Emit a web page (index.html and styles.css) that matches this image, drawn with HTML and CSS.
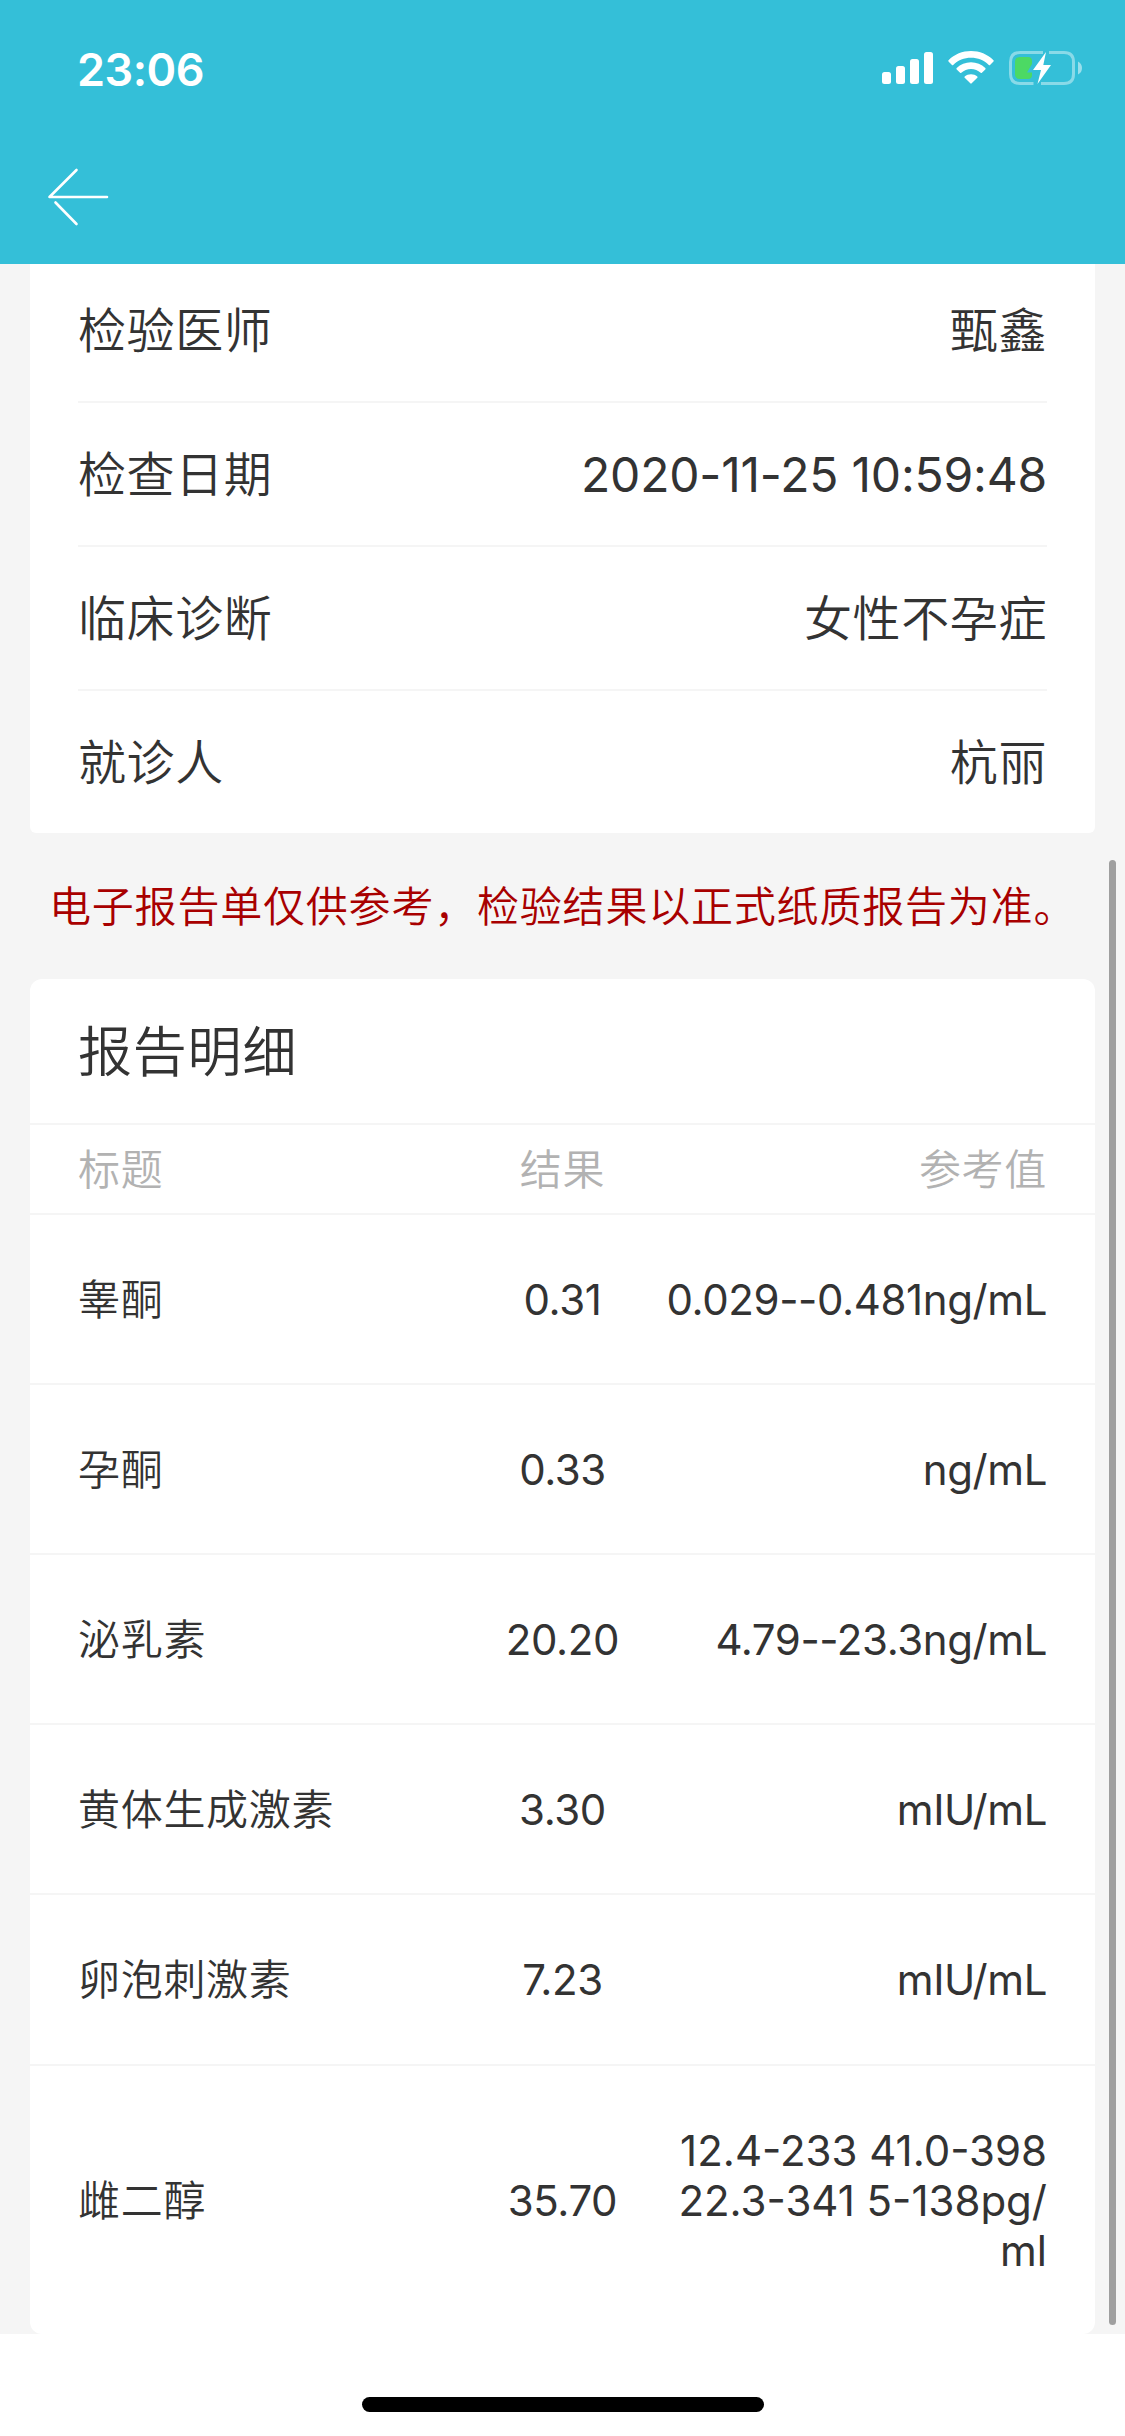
FILE: index.html
```html
<!DOCTYPE html>
<html lang="zh-CN">
<head>
  <meta charset="UTF-8">
  <meta name="viewport" content="width=device-width, initial-scale=1.0">
  <title>检验报告</title>
  <link rel="stylesheet" href="styles.css">
</head>
<body>
  <header class="header">
    <div class="status-bar">
      <span class="time">23:06</span>
      <svg class="status-icons" width="204" height="40" viewBox="880 50 204 40">
        <!-- signal -->
        <g fill="#fff">
          <rect x="882" y="73" width="9" height="12" rx="2.5"/>
          <rect x="896" y="67" width="9" height="18" rx="2.5"/>
          <rect x="910" y="60" width="9" height="25" rx="2.5"/>
          <rect x="924" y="53" width="9" height="32" rx="2.5"/>
        </g>
        <!-- wifi -->
        <g fill="#fff">
          <path d="M971 52C962.500 52 954.500 55.200 948.500 61.200Q948 61.800 948.500 62.400L952 65.900Q952.600 66.500 953.200 65.900C958 61.300 964.200 58.800 971 58.800S984 61.300 988.800 65.900Q989.400 66.500 990 65.900L993.500 62.400Q994 61.800 993.500 61.200C987.500 55.200 979.500 52 971 52Z"/>
          <path d="M971 63.200C965.500 63.200 960.500 65.300 956.700 69Q956 69.700 956.700 70.400L960.100 73.800Q960.700 74.400 961.300 73.800C964 71.400 967.300 70 971 70S978 71.400 980.700 73.800Q981.300 74.400 981.900 73.800L985.300 70.400Q986 69.700 985.300 69C981.500 65.300 976.500 63.200 971 63.200Z"/>
          <path d="M971 75.200C968.600 75.200 966.400 76 964.700 77.400Q964 78 964.700 78.700L970.300 84.300Q971 85 971.700 84.300L977.300 78.700Q978 78 977.300 77.400C975.600 76 973.400 75.200 971 75.200Z"/>
        </g>
        <!-- battery -->
        <path d="M1043 53.500H1020Q1010.500 53.500 1010.500 63V75Q1010.500 84.500 1020 84.500H1033.500M1049 53.500H1064Q1073.500 53.500 1073.500 63V75Q1073.500 84.500 1064 84.500H1041" fill="none" stroke="#fff" stroke-opacity=".42" stroke-width="3"/>
        <path d="M1078 62.500Q1082 64.500 1082 69T1078 75.500Z" fill="#fff" fill-opacity=".5"/>
        <path d="M1020 58H1028Q1032 58 1032 62V65L1027 73.500H1032V76Q1032 80 1028 80H1020Q1015 80 1015 75V63Q1015 58 1020 58Z" fill="#4cd964"/>
        <path d="M1046 53L1033 71H1041L1037.500 85L1051 66H1043.300Z" fill="#fff"/>
      </svg>
    </div>
    <div class="nav-bar">
      <svg class="back" width="64" height="60" viewBox="46 167 64 60" fill="none" stroke="#fff" stroke-width="2.600" stroke-linecap="round" stroke-linejoin="round">
        <path d="M107 197H49.500L76.500 170M55.500 202.500L76.500 224"/>
      </svg>
    </div>
  </header>

  <main class="content">
    <section class="info-card">
      <div class="info-row"><span>检验医师</span><span>甄鑫</span></div>
      <div class="info-row"><span>检查日期</span><span class="date">2020-11-25 10:59:48</span></div>
      <div class="info-row"><span>临床诊断</span><span>女性不孕症</span></div>
      <div class="info-row"><span>就诊人</span><span>杭丽</span></div>
    </section>

    <p class="notice">电子报告单仅供参考，检验结果以正式纸质报告为准。</p>

    <section class="detail-card">
      <h2 class="detail-title">报告明细</h2>
      <div class="detail-row detail-head"><span>标题</span><span>结果</span><span>参考值</span></div>
      <div class="detail-row"><span>睾酮</span><span class="num">0.31</span><span class="num">0.029--0.481ng/mL</span></div>
      <div class="detail-row"><span>孕酮</span><span class="num">0.33</span><span class="num">ng/mL</span></div>
      <div class="detail-row"><span>泌乳素</span><span class="num">20.20</span><span class="num">4.79--23.3ng/mL</span></div>
      <div class="detail-row"><span>黄体生成激素</span><span class="num">3.30</span><span class="num">mIU/mL</span></div>
      <div class="detail-row"><span>卵泡刺激素</span><span class="num">7.23</span><span class="num">mIU/mL</span></div>
      <div class="detail-row"><span>雌二醇</span><span class="num">35.70</span><span class="num multi">12.4-233 41.0-398<br>22.3-341 5-138pg/<br>ml</span></div>
    </section>
    <div class="scrollbar"></div>
  </main>

  <footer class="footer">
    <div class="home-indicator"></div>
  </footer>
</body>
</html>
```
FILE: styles.css
```css
* {
  box-sizing: border-box;
}

body {
  margin: 0;
  width: 1125px;
  height: 2436px;
  display: flex;
  flex-direction: column;
  overflow: hidden;
  background: #fff;
  color: #333;
  font-family: "Noto Sans CJK SC", sans-serif;
  font-weight: 350;
}

.header {
  height: 264px;
  background: #34bfd8;
  flex-shrink: 0;
}

.status-bar {
  height: 138px;
  padding: 0 41px 0 77px;
  display: flex;
  justify-content: space-between;
  align-items: center;
}

.time {
  font-family: Inter, sans-serif;
  font-size: 45px;
  font-weight: 600;
  letter-spacing: -0.5px;
  color: #fff;
}

.nav-bar {
  padding: 29px 46px;
}

.back {
  display: block;
}

.content {
  position: relative;
  height: 2070px;
  padding: 0 30px;
  overflow: hidden;
  background: #f5f5f5;
}

/* the page is scrolled, the first row goes a little under the header */
.info-card {
  margin-top: -5px;
  padding: 0 48px;
  background: #fff;
  border-radius: 0 0 6px 6px;
}

.info-row {
  height: 144px;
  padding-bottom: 6px;
  display: flex;
  justify-content: space-between;
  align-items: center;
  border-bottom: 2px solid #f5f5f5;
  font-size: 48px;
  letter-spacing: 0.6px;
}

.info-row:last-child {
  height: 142px;
  border-bottom: none;
}

.date {
  padding-top: 6px;
  font-family: Inter, sans-serif;
  font-weight: 400;
  letter-spacing: -0.2px;
}

.notice {
  margin: 0;
  padding: 0 0 4px 19px;
  font-size: 42px;
  line-height: 142px;
  letter-spacing: 0.8px;
  white-space: nowrap;
  color: #a80000;
}

.detail-card {
  background: #fff;
  border-radius: 12px;
}

.detail-title {
  margin: 0;
  padding: 0 48px 4px;
  font-size: 54px;
  font-weight: 350;
  line-height: 140px;
  letter-spacing: 0.8px;
  border-bottom: 2px solid #f5f5f5;
}

.detail-row {
  display: grid;
  grid-template-columns: 2fr 1fr 2fr;
  align-items: center;
  padding: 57px 48px 61px;
  border-bottom: 2px solid #f5f5f5;
  font-size: 42px;
  line-height: 50.15px;
  letter-spacing: 0.7px;
}

.detail-row:last-child {
  border-bottom: none;
}

.detail-row span:nth-child(2) {
  text-align: center;
}

.detail-row span:nth-child(3) {
  text-align: right;
  white-space: nowrap;
}

.detail-head {
  padding: 17px 48px 20.7px;
  color: #b2b2b2;
}

.detail-row .num {
  margin: 3px 0 -3px;
  font-family: Inter, sans-serif;
  font-weight: 400;
  letter-spacing: -0.4px;
}

.detail-row .multi {
  letter-spacing: 0;
}

.scrollbar {
  position: absolute;
  top: 596px;
  right: 9px;
  width: 7px;
  height: 1465px;
  border-radius: 4px;
  background: #9f9f9f;
}

.footer {
  flex: 1;
  display: flex;
  justify-content: center;
  padding-top: 63px;
}

.home-indicator {
  width: 402px;
  height: 15px;
  border-radius: 8px;
  background: #000;
}
```
